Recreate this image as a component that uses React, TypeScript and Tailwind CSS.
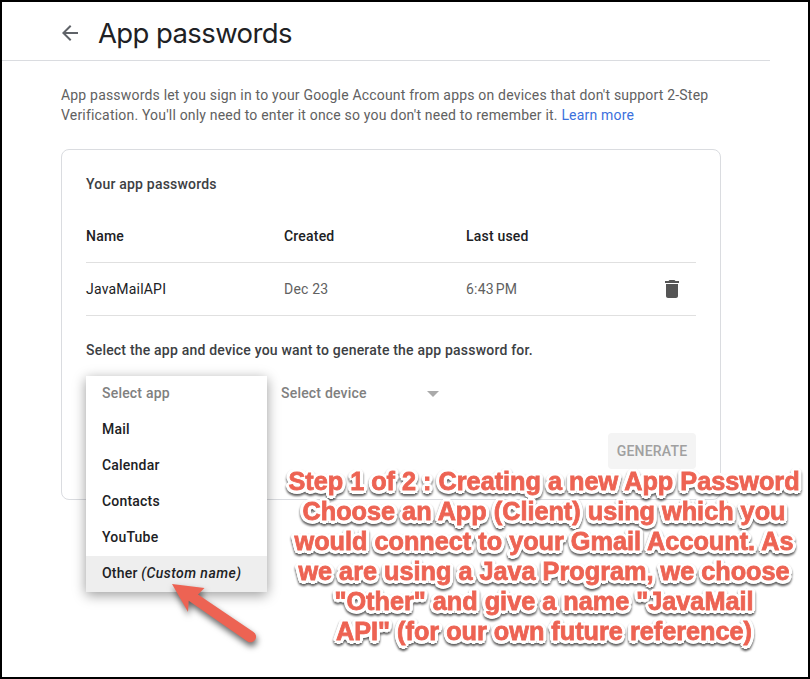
import React from "react";

const apps = ["Mail", "Calendar", "Contacts", "YouTube"];

const noteLines = [
  "Step 1 of 2 : Creating a new App Password",
  "Choose an App (Client) using which you",
  "would connect to your Gmail Account. As",
  "we are using a Java Program, we choose",
  "\"Other\" and give a name \"JavaMail",
  "API\" (for our own future reference)",
];

function Header() {
  return (
    <header className="flex h-[59px] w-[768px] items-center border-b border-[#dadce0] pl-[56px]">
      <svg className="mt-[3px] h-6 w-6" viewBox="0 0 24 24" fill="#5f6368">
        <path d="M20 11H7.83l5.59-5.59L12 4l-8 8 8 8 1.41-1.41L7.83 13H20v-2z" />
      </svg>
      <h1 className="ml-4 mt-[3px] whitespace-nowrap font-['Inter',sans-serif] text-[27.5px] leading-9 tracking-[-0.6px] text-[#202124]">
        App passwords
      </h1>
    </header>
  );
}

function PasswordTable() {
  return (
    <div className="text-[#202124]">
      <div className="grid h-[53px] grid-cols-[198px_182px_1fr] items-center border-b border-[#e0e0e0] font-medium">
        <span>Name</span>
        <span>Created</span>
        <span>Last used</span>
      </div>
      <div className="grid h-[53px] grid-cols-[198px_182px_1fr_36px] items-center border-b border-[#e0e0e0]">
        <span>JavaMailAPI</span>
        <span className="text-[#616161]">Dec 23</span>
        <span className="text-[#616161]">6:43&#8239;PM</span>
        <svg className="h-6 w-6" viewBox="0 0 24 24" fill="#555">
          <path d="M6 19c0 1.1.9 2 2 2h8c1.100 0 2-.9 2-2V7H6v12zM19 4h-3.500l-1-1h-5l-1 1H5v2h14V4z" />
        </svg>
      </div>
    </div>
  );
}

function AppMenu() {
  return (
    <ul className="absolute left-[24px] top-[226px] w-[181px] bg-white font-medium text-[#202124] shadow-[0_3px_12px_rgba(0,0,0,0.4)]">
      <li className="flex h-9 items-center px-4 pb-0.5 text-[#808080]">Select app</li>
      {apps.map((app) => (
        <li key={app} className="flex h-9 items-center px-4 pb-0.5">
          {app}
        </li>
      ))}
      <li className="flex h-9 items-center whitespace-pre bg-[#eee] px-4 pb-0.5">
        Other <em className="tracking-[0.46px]">(Custom name)</em>
      </li>
    </ul>
  );
}

export default function App() {
  return (
    <main className="relative h-[679px] w-[810px] overflow-hidden border-2 border-black bg-white font-['Roboto',sans-serif] text-[14px] leading-5 tracking-[0.2px]">
      <Header />
      <p className="ml-[59px] mt-[24px] w-[660px] whitespace-nowrap tracking-[0.19px] text-[#616161]">
        App passwords let you sign in to your Google Account from apps on devices that don't support 2-Step
        <br />
        Verification. You'll only need to enter it once so you don't need to remember it.{" "}
        <a className="text-[#3b70dd]">Learn more</a>
      </p>
      <section className="relative ml-[59px] mt-[24px] h-[351px] w-[660px] rounded-lg border border-[#dadce0] px-6 pt-6">
        <h2 className="mb-[16px] font-medium text-[#3c4043]">Your app passwords</h2>
        <PasswordTable />
        <h2 className="mt-[24px] font-medium text-[#3c4043]">
          Select the app and device you want to generate the app password for.
        </h2>
        <div className="ml-[195px] mt-[23px] flex w-[158px] items-center justify-between font-medium text-[#808080]">
          Select device
          <span className="mt-0.5 h-0 w-0 border-x-[6px] border-t-[6px] border-x-transparent border-t-[#aaa]" />
        </div>
        <button className="ml-auto mt-[30px] flex h-9 w-[88px] items-center justify-center rounded-sm bg-[#f4f4f4] font-medium text-[#a0a0a0]">
          GENERATE
        </button>
        <AppMenu />
      </section>
      <svg
        className="absolute left-[158px] top-[568px] drop-shadow-[1px_4px_3px_rgba(0,0,0,0.6)]"
        width="120"
        height="96"
        viewBox="160 570 120 96"
      >
        <path
          d="M172 584 L204.500 588 L198 594.500 L253.500 632 A5.500 5.500 0 0 1 247.500 641.400 L188.700 600.700 L188 612 Z"
          fill="#ed6353"
        />
      </svg>
      <div className="absolute left-[272px] top-[464px] w-[540px] text-center font-['Liberation_Sans',Arial,sans-serif] text-[25.250px] font-bold leading-[30px] tracking-normal text-[#ed6353] drop-shadow-[0_2px_1px_rgba(0,0,0,0.65)] [-webkit-text-stroke:0.8px_#ed6353] [text-shadow:3.500px_0_white,3.200px_1.300px_white,2.500px_2.500px_white,1.300px_3.200px_white,0_3.500px_white,-1.300px_3.200px_white,-2.500px_2.500px_white,-3.200px_1.300px_white,-3.500px_0_white,-3.200px_-1.300px_white,-2.500px_-2.500px_white,-1.300px_-3.200px_white,0_-3.500px_white,1.300px_-3.200px_white,2.500px_-2.500px_white,3.200px_-1.300px_white]">
        {noteLines.map((line) => (
          <div key={line} className="whitespace-nowrap">
            {line}
          </div>
        ))}
      </div>
    </main>
  );
}
